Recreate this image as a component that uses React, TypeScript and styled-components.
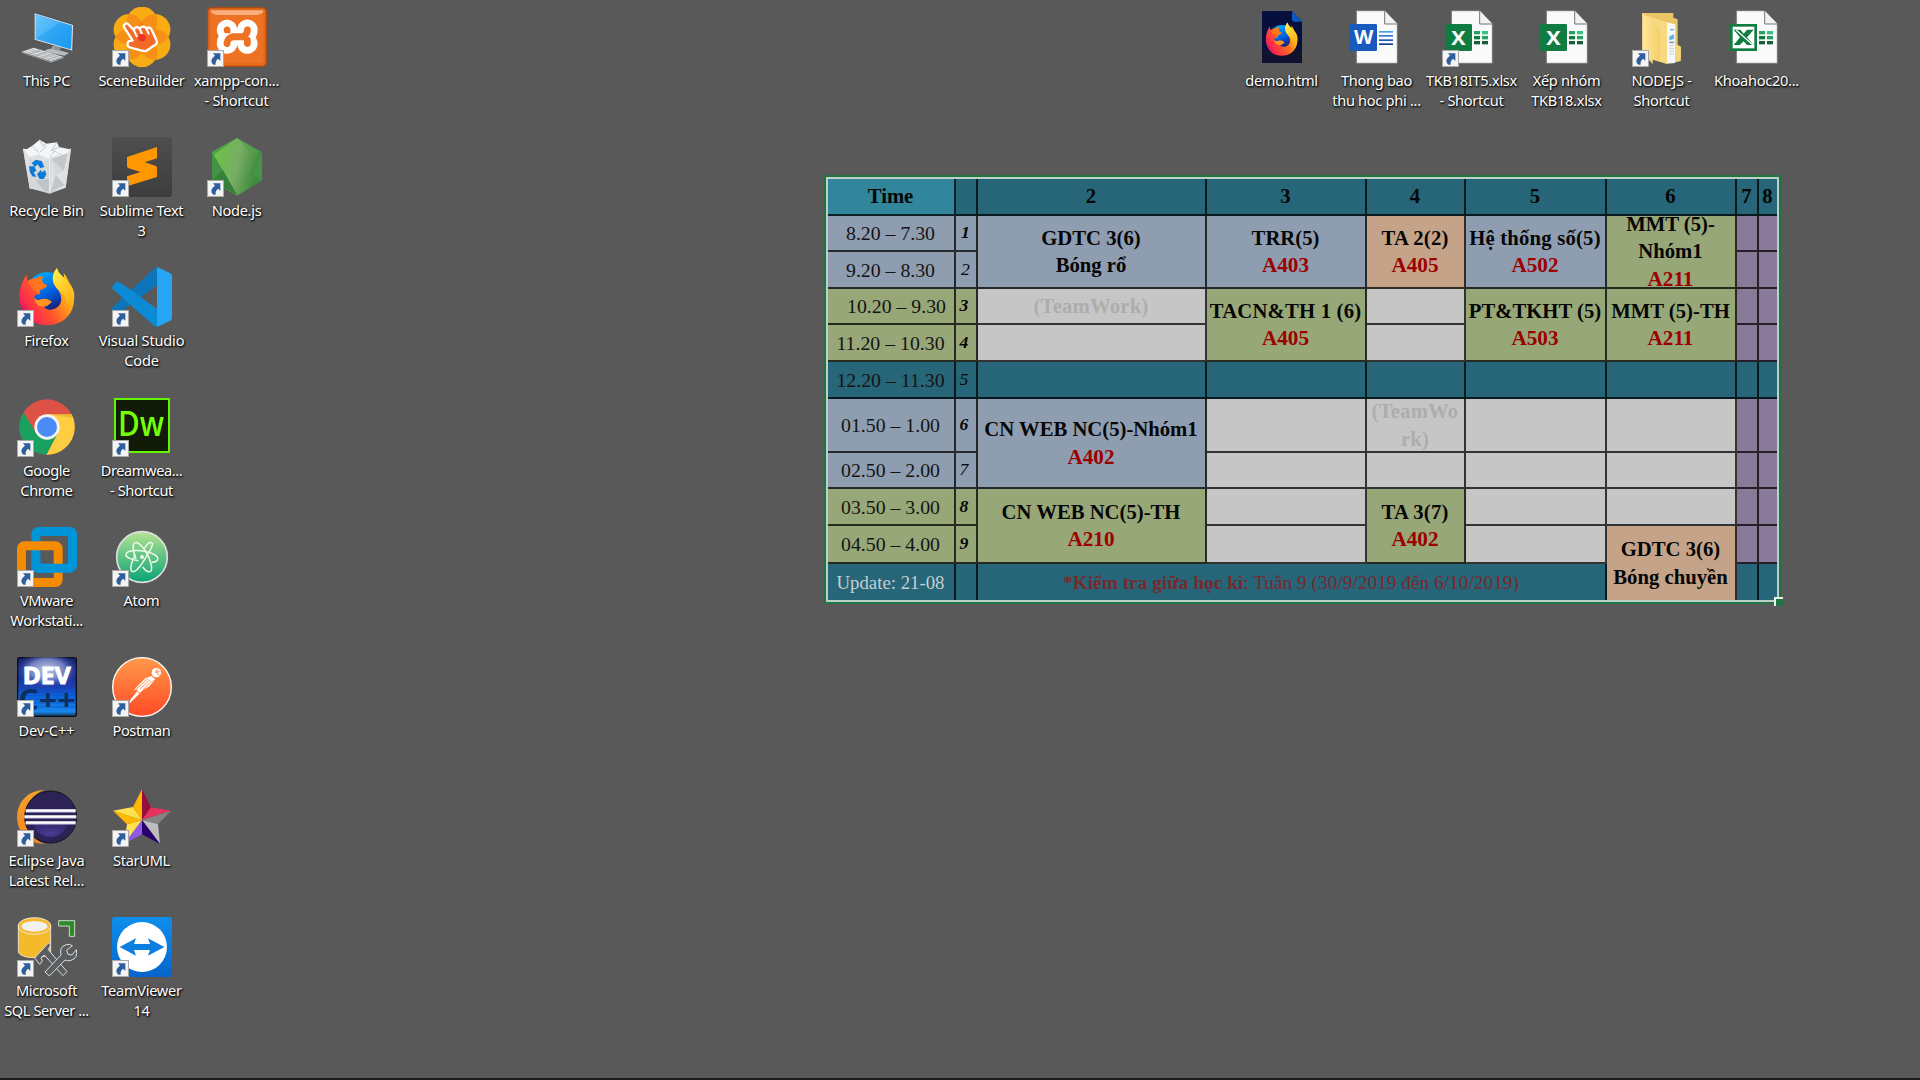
import React from "react";
import styled, { createGlobalStyle, css } from "styled-components";
import { SiXampp } from "react-icons/si";

const GlobalStyle = createGlobalStyle`
  html, body { margin: 0; padding: 0; background: #595959; overflow: hidden; }
  * { box-sizing: border-box; }
`;

const Desktop = styled.main`
  display: flex;
  width: 1920px;
  height: 1080px;
  background: #595959;
  border-bottom: 2px solid #1c1c1c;
  overflow: hidden;
`;

const ShortcutColumns = styled.section`
  display: grid;
  flex: none;
  grid-template-columns: repeat(3, 95px);
  grid-auto-rows: 130px;
  grid-auto-flow: row;
  align-content: start;
`;

const Workspace = styled.section`
  display: flex;
  flex-direction: column;
  flex: 1;
`;

const FileRow = styled.div`
  display: flex;
  height: 175px;
  padding-left: 950px;
`;

const Item = styled.figure<{ $col?: number; $row?: number }>`
  display: flex;
  flex-direction: column;
  align-items: center;
  width: 95px;
  height: 130px;
  margin: 0;
  padding-top: 7px;
  ${(p) => p.$col && css`grid-column: ${p.$col};`}
  ${(p) => p.$row && css`grid-row: ${p.$row};`}
`;

const IconBox = styled.div`
  position: relative;
  width: 60px;
  height: 60px;
  margin-right: 1px;
`;

const Art = styled.svg`
  display: block;
  width: 60px;
  height: 60px;
`;

const Overlay = styled.svg`
  position: absolute;
  left: 0;
  bottom: 0;
  width: 17px;
  height: 17px;
`;

const Label = styled.figcaption`
  display: flex;
  flex-direction: column;
  align-items: center;
  margin-top: 3px;
  margin-right: 2px;
  color: #fff;
  font: 400 14.6px/20px "Noto Sans", "Open Sans", sans-serif;
  white-space: nowrap;
  text-shadow: 1px 1px 2px #000, 0 1px 2px rgba(0, 0, 0, 0.8);
`;

const Line = styled.span<{ $ls: number }>`
  letter-spacing: ${(p) => p.$ls}px;
`;

const Frame = styled.div`
  position: relative;
  width: 957px;
  height: 429px;
  margin-left: 539px;
  border: 2px solid #217346;
`;

const Timetable = styled.div`
  display: grid;
  width: 953px;
  height: 425px;
  border: 2px solid #bcd0c5;
  grid-template-columns: 128px 22px 229px 160px 99px 141px 130px 22px 18px;
  grid-template-rows: 37px 36px 37px 36px 37px 37px 54px 36px 37px 38px 36px;
  font-family: "Liberation Serif", "Times New Roman", serif;
  color: #060606;
`;

const Handle = styled.span`
  position: absolute;
  right: -4px;
  bottom: -4px;
  width: 9px;
  height: 9px;
  border: solid #e8f0ec;
  border-width: 2px 0 0 2px;
  background: #217346;
`;

const tones = {
  teal: "#266678",
  cyan: "#31869b",
  blue: "#8f9db1",
  green: "#97a778",
  peach: "#c4a389",
  grey: "#c6c6c6",
  purple: "#8a7a9a",
};
type Tone = keyof typeof tones;

const Cell = styled.div<{ $tone: Tone; $c: number; $r: number; $cs: number; $rs: number }>`
  display: flex;
  flex-direction: column;
  align-items: center;
  justify-content: center;
  overflow: hidden;
  min-width: 0;
  min-height: 0;
  padding-top: 1px;
  padding-right: 1px;
  grid-column: ${(p) => p.$c} / span ${(p) => p.$cs};
  grid-row: ${(p) => p.$r} / span ${(p) => p.$rs};
  background: ${(p) => tones[p.$tone]};
  border: 0 solid rgba(0, 0, 0, 0.74);
  border-right-width: ${(p) => (p.$c + p.$cs > 9 ? 0 : 2)}px;
  border-bottom-width: ${(p) => (p.$r + p.$rs > 11 ? 0 : 2)}px;
`;

const Subject = styled.span<{ $faint?: boolean; $wide?: boolean }>`
  flex: none;
  font-size: 20.7px;
  line-height: 27.3px;
  font-weight: 700;
  white-space: nowrap;
  letter-spacing: ${(p) => (p.$wide ? 0.2 : 0)}px;
  color: ${(p) => (p.$faint ? "#adadad" : "inherit")};
`;

const Room = styled(Subject)`
  font-size: 21.2px;
  color: #9c0000;
`;

const Hours = styled.span<{ $indent?: boolean; $light?: boolean }>`
  font-size: ${(p) => (p.$light ? 18.8 : 19.8)}px;
  white-space: nowrap;
  padding-left: ${(p) => (p.$indent ? 12 : 0)}px;
  color: ${(p) => (p.$light ? "#c4cfd2" : "#141414")};
`;

const Period = styled.span<{ $bold: boolean; $end?: boolean }>`
  font-size: 17.6px;
  line-height: 20px;
  font-style: italic;
  font-weight: ${(p) => (p.$bold ? 700 : 400)};
  padding-bottom: 3px;
  padding-right: ${(p) => (p.$end ? 0 : 3)}px;
`;

const Note = styled.span`
  font-size: 19.35px;
  white-space: nowrap;
  color: #79282c;
`;

/* ---------- icons, drawn on a 180-unit board ---------- */

const ShortcutArrow = () => (
  <Overlay viewBox="0 0 51 51">
    <rect x="1.5" y="1.5" width="48" height="48" fill="#f4f4f4" stroke="#a9a9a9" strokeWidth="3" />
    <path d="M18 10H40V32L33 26C27 31 25 36 26 44H20C11 38 10 27 24 17Z" fill="#2d5f9e" />
  </Overlay>
);

const ThisPC = () => (
  <Art viewBox="0 0 180 180">
    <defs>
      <linearGradient id="pc" x1="0" y1="0" x2="1" y2="1">
        <stop offset="0" stopColor="#6cc5fb" />
        <stop offset="1" stopColor="#1a9df5" />
      </linearGradient>
    </defs>
    <path d="M108 116l18 6v8l30 8-14 8q-12-2-22-4-22-4-38-10 4-6 22-7z" fill="#b7bcc0" />
    <path d="M112 113l20 8-4 10-20-4z" fill="#8b9196" />
    <path d="M53 17L170 53 167 131 53 98Z" fill="#d9dde0" />
    <path d="M56 21L165 56 162 127 56 96Z" fill="url(#pc)" />
    <path d="M56 96L130 45 165 56 162 127Z" fill="#0d8fee" opacity=".35" />
    <path d="M53 17L170 53 167 131" fill="none" stroke="#303438" strokeWidth="2" />
    <path d="M14 134L50 122 140 150 103 163Z" fill="#dfe1e3" />
    <path d="M14 134v4l88 29 38-13v-4l-37 13z" fill="#8f9499" />
    <path d="M26 134l90 26M36 130l90 26M44 127l88 25M36 141l38-13M54 147l38-13M74 153l38-13M92 158l36-13" stroke="#9aa0a5" strokeWidth="2" fill="none" />
  </Art>
);

const SceneBuilder = () => {
  const petals = [0, 60, 120, 180, 240, 300].map((a) => {
    const t = (a * Math.PI) / 180;
    return [90 + 45 * Math.sin(t), 90 - 45 * Math.cos(t)];
  });
  return (
    <Art viewBox="0 0 180 180">
      {petals.map(([x, y], i) => <circle key={i} cx={x} cy={y} r="46" fill="#fdd00f" />)}
      {petals.map(([x, y], i) => <circle key={i} cx={x} cy={y} r="46" fill="#f0431f" opacity=".26" />)}
      <path d="M37 62C32 52 43 45 51 54L66 70C66 60 77 58 83 65C88 57 98 57 103 64C112 58 118 64 121 73L134 101C137 108 133 111 129 114L103 131C98 134 93 131 86 130L53 121C46 119 44 108 50 103L62 100Z" fill="#f26a25" stroke="#fff" strokeWidth="7" strokeLinejoin="round" />
      <path d="M66 70l8 18M83 66l8 17M103 65l7 15" stroke="#fff" strokeWidth="6" strokeLinecap="round" />
      <circle cx="90" cy="92" r="11" fill="#ee3124" />
    </Art>
  );
};

const Xampp = () => (
  <Art viewBox="0 0 180 180">
    <defs>
      <linearGradient id="xa" x1="0" y1="0" x2="0" y2="1">
        <stop offset="0" stopColor="#f79a58" />
        <stop offset=".16" stopColor="#ea6a1e" />
        <stop offset="1" stopColor="#f07422" />
      </linearGradient>
    </defs>
    <rect x="18" y="18" width="144" height="144" fill="#fff" />
    <SiXampp x="6" y="6" width="168" height="168" size={168} color="#ed7224" />
    <rect x="6" y="6" width="168" height="168" rx="10" fill="none" stroke="#e56a1c" strokeWidth="10" />
    <rect x="2" y="2" width="176" height="176" rx="12" fill="none" stroke="#a9480f" strokeWidth="4" />
    <path d="M12 10H168Q172 20 150 24H30Q8 20 12 10Z" fill="#fbc39b" opacity=".75" />
  </Art>
);

const RecycleBin = () => (
  <Art viewBox="0 0 180 180">
    <path d="M18 36L162 36 146 152 98 170 38 154Z" fill="#c9cdd0" />
    <path d="M18 36L162 36 146 152 98 166 38 154Z" fill="#e3e5e7" opacity=".8" />
    <path d="M24 40L46 26 68 8 88 20 120 16 126 30 154 36 148 62 120 54 96 66 66 52 36 60Z" fill="#f4f5f6" />
    <path d="M68 8l10 20 10-8M46 26l20 22 22-20M120 16l-18 26 24-12M96 66l16-24 36 20" stroke="#c1c5c8" strokeWidth="3" fill="none" />
    <path d="M104 66l48-18-12 54zM100 166l16-52 26 30z" fill="#c3c7ca" />
    <path d="M104 66l12 48 24-12zM36 60l18 20 50-14-6 100-60-12z" fill="#d5d8db" />
    <path d="M56 130l24 30 18 6 2-40z" fill="#bfc4c8" />
    <path d="M18 36L98 54 162 36M98 54V168" stroke="#f3f4f5" strokeWidth="2.5" fill="none" />
    <g fill="#0c7bd8">
      <path d="M44 78l12-10 18 4 8 18-12 4-8-12-8 8z" />
      <path d="M36 88l16 0 6 14-8 4 8 14-12-2-8-14z" />
      <path d="M60 112l12-14 2 8 10-6 4 12-8 14-12 0z" />
    </g>
  </Art>
);

const Sublime = () => (
  <Art viewBox="0 0 180 180">
    <defs>
      <linearGradient id="su" x1="0" y1="0" x2="0" y2="1">
        <stop offset="0" stopColor="#4e4e4e" />
        <stop offset="1" stopColor="#3d3d3d" />
      </linearGradient>
    </defs>
    <rect width="180" height="180" rx="10" fill="url(#su)" />
    <path d="M45 118L135 89V120L45 148Z" fill="#ff9800" />
    <path d="M76 101L128 91 135 97V120Z" fill="#e27f00" />
    <path d="M45 60L135 30V64L98 76 132 87Q136 90 135 120L50 94Q45 92 45 86Z" fill="#ff9800" />
  </Art>
);

const NodeJs = () => (
  <Art viewBox="0 0 180 180">
    <defs>
      <linearGradient id="nj" x1="0" y1="0.3" x2="1" y2="0.6">
        <stop offset=".1" stopColor="#6cc04a" />
        <stop offset=".5" stopColor="#78ad64" />
        <stop offset=".9" stopColor="#3f8b3d" />
      </linearGradient>
    </defs>
    <path d="M90 3L165 46V131L90 176 15 131V46Z" fill="url(#nj)" />
    <path d="M15 46L92 176 90 176 15 131Z" fill="#429345" />
    <path d="M15 131L47 98 90 174Z" fill="#37803a" />
    <path d="M165 46L92 176 130 112 165 131Z" fill="#3c8a3e" opacity=".8" />
    <path d="M90 3L165 46 134 52Z" fill="#519c48" opacity=".7" />
    <path d="M165 46L132 112 165 131Z" fill="#46934a" />
    <path d="M90 3L15 46 20 54Z" fill="#4f9f45" />
  </Art>
);

const FirefoxShape = ({ id }: { id: string }) => (
  <>
    <defs>
      <linearGradient id={id + "g"} x1=".2" y1="0" x2=".7" y2="1">
        <stop offset="0" stopColor="#00b4ff" />
        <stop offset=".55" stopColor="#0060df" />
        <stop offset="1" stopColor="#1d1166" />
      </linearGradient>
      <linearGradient id={id + "b"} x1="1" y1=".1" x2="0" y2=".75">
        <stop offset="0" stopColor="#ffe226" />
        <stop offset=".3" stopColor="#ffab15" />
        <stop offset=".6" stopColor="#ff5a2a" />
        <stop offset=".85" stopColor="#ff2c4a" />
        <stop offset="1" stopColor="#c8107d" />
      </linearGradient>
      <linearGradient id={id + "y"} x1="0" y1="0" x2=".4" y2="1">
        <stop offset="0" stopColor="#fff44f" />
        <stop offset="1" stopColor="#ffb81c" />
      </linearGradient>
    </defs>
    <circle cx="90" cy="76" r="61" fill={"url(#" + id + "g)"} />
    <path d="M30 22C28 32 31 38 33 42C42 36 52 33 61 33C66 28 72 28 78 30C74 36 74 40 77 46C80 53 90 51 89 58C85 64 76 66 69 70C70 76 69 80 65 83C57 80 52 84 52 92C57 101 65 100 74 97C84 93 98 97 104 106C96 110 94 118 80 119C92 134 118 130 129 112C137 96 132 76 118 62C102 44 104 22 120 3C124 22 136 24 142 34C141 29 140 22 140 18C152 32 152 42 163 56C171 70 174 85 171 100C170 124 160 143 144 156C122 174 88 180 58 169C29 158 10 131 8 101C5 72 14 42 30 22Z" fill={"url(#" + id + "b)"} />
    <path d="M120 3C124 22 138 26 148 42C163 64 164 92 152 112C150 88 132 80 118 62C104 44 104 20 120 3Z" fill={"url(#" + id + "y)"} />
    <path d="M33 42C42 36 52 33 61 33C66 28 72 28 78 30C74 36 74 40 77 46C80 53 90 51 89 58C85 64 76 66 69 70C70 76 69 80 65 83C50 68 40 60 33 42Z" fill="#ff7a1a" opacity=".8" />
    <path d="M52 92C57 101 65 100 74 97C84 93 98 97 104 106C96 110 94 118 80 119C65 120 52 108 52 92Z" fill="#ff9520" />
  </>
);

const Firefox = () => (
  <Art viewBox="0 0 180 180"><FirefoxShape id="ff" /></Art>
);

const VsCode = () => (
  <Art viewBox="0 0 180 180">
    <path d="M128 3L135 0V55L18 140Q13 141 10 139L1 130Q-2 125 3 119Z" fill="#0e75b8" />
    <path d="M3 67Q-2 61 2 57L12 46Q17 42 22 45L135 125V180L126 176Z" fill="#0b8ad6" />
    <path d="M135 0L175 19Q180 22 180 28V152Q180 158 175 161L135 180Z" fill="#27a7f3" />
  </Art>
);

const Chrome = () => (
  <Art viewBox="0 0 180 180">
    <circle cx="90" cy="90" r="83" fill="#de5246" />
    <path d="M90 52H164A83 83 0 0 1 88 173L122 109Z" fill="#ffcd41" />
    <path d="M20 46A83 83 0 0 0 88 173L122 109 90 126 57 109Z" fill="#18a15f" />
    <path d="M90 52H164L168 63Z" fill="#d9a52e" opacity=".5" />
    <circle cx="90" cy="90" r="38" fill="#f3f3f3" />
    <circle cx="90" cy="90" r="30" fill="#4a8bf5" />
  </Art>
);

const IconText = styled.text`
  font-family: "Open Sans", "Noto Sans", sans-serif;
  font-weight: 700;
`;

const ThinIconText = styled(IconText)`
  font-weight: 600;
`;

const Dreamweaver = () => (
  <Art viewBox="0 0 180 180">
    <rect x="9" y="6" width="162" height="159" fill="#111b08" stroke="#63f500" strokeWidth="6" />
    <ThinIconText x="18" y="117" fontSize="104" fill="#75ff0a" textLength="138" lengthAdjust="spacingAndGlyphs">Dw</ThinIconText>
  </Art>
);

const VMware = () => (
  <Art viewBox="0 0 180 180" fill="none" strokeWidth="27">
    <rect x="56.500" y="13.500" width="110" height="110" rx="8" stroke="#0095d9" />
    <rect x="13.500" y="56.500" width="110" height="110" rx="8" stroke="#f58b00" />
    <path d="M56.500 84V116Q56.500 123.500 64 123.500H150" stroke="#0095d9" />
  </Art>
);

const Atom = () => (
  <Art viewBox="0 0 180 180">
    <defs>
      <linearGradient id="at" x1="0" y1="0" x2="0" y2="1">
        <stop offset="0" stopColor="#b6e392" />
        <stop offset="1" stopColor="#07a377" />
      </linearGradient>
    </defs>
    <circle cx="90" cy="90" r="76" fill="url(#at)" stroke="#dedede" strokeWidth="5" />
    <g fill="none" stroke="#eefbe9" strokeWidth="4.500">
      <path d="M79 101C56 98 40 90 42 82C44 71 72 68 98 73C122 77 139 88 137 97C136 103 129 105 120 106" />
      <path d="M72 96C62 73 60 52 69 47C78 42 96 62 108 86C119 109 123 130 114 134C108 137 100 130 92 120" />
      <path d="M97 64C106 48 117 42 121 49C125 58 110 76 96 100C82 124 67 138 60 133C53 127 58 105 70 82" />
    </g>
    <circle cx="90" cy="90" r="6" fill="#f4fff0" />
  </Art>
);

const DevCpp = () => (
  <Art viewBox="0 0 180 180">
    <defs>
      <linearGradient id="dv" x1="0" y1="0" x2="0" y2="1">
        <stop offset="0" stopColor="#17206a" />
        <stop offset=".5" stopColor="#1d3fb0" />
        <stop offset=".65" stopColor="#0c63dc" />
        <stop offset=".92" stopColor="#1787ea" />
        <stop offset="1" stopColor="#16344f" />
      </linearGradient>
      <radialGradient id="dw">
        <stop offset="0" stopColor="#c5cbea" />
        <stop offset=".55" stopColor="#8490cb" stopOpacity=".85" />
        <stop offset="1" stopColor="#2338a0" stopOpacity="0" />
      </radialGradient>
    </defs>
    <rect x="2" y="2" width="176" height="176" rx="6" fill="url(#dv)" stroke="#0c0d18" strokeWidth="4" />
    <ellipse cx="90" cy="38" rx="96" ry="56" fill="url(#dw)" />
    <path d="M4 96H176M4 106H176M4 116H176M4 126H176M4 138H176M4 150H176" stroke="#0b4fc0" strokeWidth="3" opacity=".6" />
    <IconText x="4" y="159" fontSize="86" fill="#0c2f5f" textLength="172" lengthAdjust="spacingAndGlyphs">C++</IconText>
    <IconText x="17" y="81" fontSize="70" fill="#fff" stroke="#fff" strokeWidth="3" textLength="144" lengthAdjust="spacingAndGlyphs">DEV</IconText>
  </Art>
);

const Postman = () => (
  <Art viewBox="0 0 180 180">
    <defs>
      <linearGradient id="po" x1="0" y1="0" x2="0" y2="1">
        <stop offset="0" stopColor="#ff9a4a" />
        <stop offset="1" stopColor="#ff4a26" />
      </linearGradient>
    </defs>
    <circle cx="90" cy="90" r="88" fill="url(#po)" stroke="#fff" strokeWidth="4" />
    <circle cx="133" cy="47" r="14" fill="#fff" />
    <path d="M136 36L131 46 142 44M134 49l8 6" stroke="#ff7a3c" strokeWidth="3" fill="none" />
    <path d="M119 57L129 67 112 88 92 100 76 116 60 132 52 140 55 128 70 110 78 98 66 98 82 82 100 64Z" fill="#fff" />
    <path d="M72 97L108 64M84 96L114 68M93 98L121 70M76 104l12 6" stroke="#ff7a3c" strokeWidth="2.500" />
  </Art>
);

const Eclipse = () => (
  <Art viewBox="0 0 180 180">
    <defs>
      <radialGradient id="ec" cx=".5" cy=".7" r=".5">
        <stop offset="0" stopColor="#4b3b93" />
        <stop offset="1" stopColor="#3a2d78" />
      </radialGradient>
      <linearGradient id="eo" x1="0" y1="0" x2="0" y2="1">
        <stop offset="0" stopColor="#f7a22b" />
        <stop offset="1" stopColor="#f58220" />
      </linearGradient>
    </defs>
    <path d="M82 9C-26 12 -28 168 82 171C8 146 8 32 82 9Z" fill="url(#eo)" />
    <circle cx="101" cy="90" r="78" fill="#2c2255" stroke="#15121c" strokeWidth="3" />
    <path d="M49 112H151A53 53 0 0 1 49 112Z" fill="url(#ec)" />
    <path d="M26 71H176M22 89H178M26 107H176" stroke="#fff" strokeWidth="9" />
    <path d="M26 75H176M22 93H178M26 111H176" stroke="#b9b4d8" strokeWidth="2" />
  </Art>
);

const StarUml = () => {
  const facets: [string, string][] = [
    ["90,7 117,61", "#970f3c"],
    ["117,61 177,71", "#e8315c"],
    ["177,71 138,112", "#838383"],
    ["138,112 144,171", "#bdbdbd"],
    ["144,171 90,142", "#29006b"],
    ["90,142 36,171", "#8f5ae6"],
    ["36,171 45,112", "#ffe04e"],
    ["45,112 3,71", "#ffb800"],
    ["3,71 63,60", "#ffe04e"],
    ["63,60 90,7", "#ffb800"],
  ];
  return (
    <Art viewBox="0 0 180 180">
      {facets.map(([p, c]) => <polygon key={p} points={"90,99 " + p} fill={c} />)}
    </Art>
  );
};

const SqlServer = () => (
  <Art viewBox="0 0 180 180">
    <path d="M4 27V104C8 128 94 128 101 104V27Z" fill="#f5b92c" stroke="#e9dfc6" strokeWidth="3" />
    <ellipse cx="52.500" cy="27" rx="49" ry="25" fill="#f5b92c" stroke="#efe6d0" strokeWidth="3" />
    <ellipse cx="52.500" cy="28" rx="39" ry="16" fill="#f1f1f1" />
    <path d="M125 11H173V58H157V27H125Z" fill="#2f8a2c" stroke="#c9dcc5" strokeWidth="3" />
    <g fill="#5b5e60" stroke="#dcdcdc" strokeWidth="3" strokeLinejoin="round">
      <path d="M53 123L94 78 101 84 94 98 150 164 138 176 82 114 72 122 76 132 68 142Z" />
      <path d="M84 165L132 114Q126 88 148 83Q158 80 166 86L149 100 153 112 165 114 178 98Q184 124 162 130Q152 134 144 129L97 177Z" />
    </g>
  </Art>
);

const TeamViewer = () => (
  <Art viewBox="0 0 180 180">
    <defs>
      <linearGradient id="tv" x1="0" y1="0" x2="0" y2="1">
        <stop offset="0" stopColor="#0f8fec" />
        <stop offset="1" stopColor="#0664cb" />
      </linearGradient>
    </defs>
    <rect width="180" height="180" rx="8" fill="url(#tv)" />
    <circle cx="90" cy="90" r="75" fill="#fff" />
    <path d="M23 90L72 64 66 81H114L108 64 157 90 108 116 114 99H66L72 116Z" fill="#0d7fe0" />
  </Art>
);

const HtmlFile = () => (
  <Art viewBox="0 0 180 180">
    <path d="M30 12H120L150 44V168H30Z" fill="#070f3c" />
    <path d="M30 130H150V168H30Z" fill="#101230" />
    <path d="M120 12L150 44H128Q120 44 120 36Z" fill="#0a59c2" />
    <path d="M121 9H153V43Z" fill="#595959" />
    <g transform="translate(37 45) scale(.58)"><FirefoxShape id="fh" /></g>
  </Art>
);

const Sheet = ({ children }: { children: React.ReactNode }) => (
  <Art viewBox="0 0 180 180">
    <path d="M28 11H114L151 50V169H28Z" fill="#fafafa" stroke="#757575" strokeWidth="3" />
    <path d="M113 11V51H151" fill="#f2f2f2" stroke="#757575" strokeWidth="3" />
    {children}
  </Art>
);

const WordFile = () => (
  <Sheet>
    <rect x="9" y="51" width="81" height="81" rx="4" fill="#185abd" />
    <IconText x="21" y="112" fontSize="57" fill="#fff" textLength="58" lengthAdjust="spacingAndGlyphs">W</IconText>
    <rect x="96" y="72" width="42" height="5" fill="#41a5ee" />
    <rect x="96" y="84" width="42" height="5" fill="#2b7cd3" />
    <rect x="96" y="97" width="42" height="5" fill="#185abd" />
    <rect x="96" y="109" width="42" height="5" fill="#103f91" />
  </Sheet>
);

const SheetBars = () => (
  <>
    <path d="M96 72h18v10h-18z" fill="#21a366" />
    <path d="M120 72h18v10h-18z" fill="#33c481" />
    <path d="M96 87h18v10h-18z" fill="#107c41" />
    <path d="M120 87h18v10h-18z" fill="#21a366" />
    <path d="M96 102h42v10h-42z" fill="#185c37" />
    <path d="M114 70h6v44h-6z" fill="#fafafa" />
  </>
);

const ExcelFile = () => (
  <Sheet>
    <rect x="9" y="51" width="81" height="81" rx="4" fill="#107c41" />
    <IconText x="28" y="113" fontSize="60" fill="#fff" textLength="43" lengthAdjust="spacingAndGlyphs">X</IconText>
    <SheetBars />
  </Sheet>
);

const ExcelLegacyFile = () => (
  <Sheet>
    <rect x="13" y="55" width="73" height="73" fill="#fff" stroke="#107c41" strokeWidth="8" />
    <path d="M20 68H40L50 80 60 68H80L60 91 80 114H60L50 103 38 114H20L39 91Z" fill="#107c41" />
    <path d="M28 70L78 114" stroke="#fff" strokeWidth="4" />
    <SheetBars />
  </Sheet>
);

const Folder = () => (
  <Art viewBox="0 0 180 180">
    <defs>
      <linearGradient id="fo" x1="0" y1="0" x2="1" y2="0">
        <stop offset="0" stopColor="#ffe79b" />
        <stop offset="1" stopColor="#f3cf69" />
      </linearGradient>
    </defs>
    <path d="M31 18H124V32L137 37V114L147 120 146 162 122 166 31 130Z" fill="#e9c566" />
    <path d="M102 46L130 52V168L102 170Z" fill="#f5f6f7" />
    <path d="M114 66h12v4h-12zM112 88l14-6v14l-14 4z" fill="#5fb3ea" />
    <path d="M112 104h14v4h-14zM112 116h14M112 124h14M112 132h14M112 140h14" stroke="#b8bdc2" strokeWidth="2" fill="#4b90cf" />
    <path d="M46 26L105 46V171L62 158Z" fill="#f7d97f" />
    <path d="M31 18L70 48Q84 60 84 80V160L62 158V172L31 134Z" fill="url(#fo)" />
    <path d="M129 110L137 114 147 120 146 162 129 166Z" fill="#f5d57a" />
  </Art>
);

/* ---------- desktop items ---------- */

type Entry = {
  art: React.FC;
  lines: string[];
  ls?: number;
  link?: boolean;
  col?: number;
  row?: number;
};

const shortcuts: Entry[] = [
  { art: ThisPC, lines: ["This PC"], ls: -0.4, col: 1, row: 1 },
  { art: SceneBuilder, lines: ["SceneBuilder"], link: true, col: 2, row: 1 },
  { art: Xampp, lines: ["xampp-con...", "- Shortcut"], link: true, col: 3, row: 1 },
  { art: RecycleBin, lines: ["Recycle Bin"], ls: -0.2, col: 1, row: 2 },
  { art: Sublime, lines: ["Sublime Text", "3"], link: true, col: 2, row: 2 },
  { art: NodeJs, lines: ["Node.js"], link: true, col: 3, row: 2 },
  { art: Firefox, lines: ["Firefox"], link: true, col: 1, row: 3 },
  { art: VsCode, lines: ["Visual Studio", "Code"], ls: -0.2, link: true, col: 2, row: 3 },
  { art: Chrome, lines: ["Google", "Chrome"], ls: -0.4, link: true, col: 1, row: 4 },
  { art: Dreamweaver, lines: ["Dreamwea...", "- Shortcut"], ls: -0.4, link: true, col: 2, row: 4 },
  { art: VMware, lines: ["VMware", "Workstati..."], ls: -0.4, link: true, col: 1, row: 5 },
  { art: Atom, lines: ["Atom"], link: true, col: 2, row: 5 },
  { art: DevCpp, lines: ["Dev-C++"], ls: -0.1, link: true, col: 1, row: 6 },
  { art: Postman, lines: ["Postman"], ls: -0.4, link: true, col: 2, row: 6 },
  { art: Eclipse, lines: ["Eclipse Java", "Latest Rel..."], ls: -0.2, link: true, col: 1, row: 7 },
  { art: StarUml, lines: ["StarUML"], link: true, col: 2, row: 7 },
  { art: SqlServer, lines: ["Microsoft", "SQL Server ..."], ls: -0.4, link: true, col: 1, row: 8 },
  { art: TeamViewer, lines: ["TeamViewer", "14"], link: true, col: 2, row: 8 },
];

const files: Entry[] = [
  { art: HtmlFile, lines: ["demo.html"] },
  { art: WordFile, lines: ["Thong bao", "thu hoc phi ..."] },
  { art: ExcelFile, lines: ["TKB18IT5.xlsx", "- Shortcut"], link: true },
  { art: ExcelFile, lines: ["Xếp nhóm", "TKB18.xlsx"] },
  { art: Folder, lines: ["NODEJS -", "Shortcut"], link: true },
  { art: ExcelLegacyFile, lines: ["Khoahoc20..."] },
];

const DesktopItem = ({ art: Picture, lines, ls = -0.3, link, col, row }: Entry) => (
  <Item $col={col} $row={row}>
    <IconBox>
      <Picture />
      {link && <ShortcutArrow />}
    </IconBox>
    <Label>
      {lines.map((l) => <Line key={l} $ls={ls}>{l}</Line>)}
    </Label>
  </Item>
);

/* ---------- timetable ---------- */

const Box = ({ t, c, r, cs = 1, rs = 1, children }: {
  t: Tone; c: number; r: number; cs?: number; rs?: number; children?: React.ReactNode;
}) => <Cell $tone={t} $c={c} $r={r} $cs={cs} $rs={rs}>{children}</Cell>;

const slots: { r: number; time: string; n: string; t: Tone; bold: boolean }[] = [
  { r: 2, time: "8.20 – 7.30", n: "1", t: "blue", bold: true },
  { r: 3, time: "9.20 – 8.30", n: "2", t: "blue", bold: false },
  { r: 4, time: "10.20 – 9.30", n: "3", t: "green", bold: true },
  { r: 5, time: "11.20 – 10.30", n: "4", t: "green", bold: true },
  { r: 6, time: "12.20 – 11.30", n: "5", t: "teal", bold: false },
  { r: 7, time: "01.50 – 1.00", n: "6", t: "blue", bold: true },
  { r: 8, time: "02.50 – 2.00", n: "7", t: "blue", bold: false },
  { r: 9, time: "03.50 – 3.00", n: "8", t: "green", bold: true },
  { r: 10, time: "04.50 – 4.00", n: "9", t: "green", bold: true },
];

const lessons: { t: Tone; c: number; r: number; rs: number; names: string[]; room?: string; wide?: boolean }[] = [
  { t: "blue", c: 3, r: 2, rs: 2, names: ["GDTC 3(6)", "Bóng rổ"] },
  { t: "blue", c: 4, r: 2, rs: 2, names: ["TRR(5)"], room: "A403" },
  { t: "peach", c: 5, r: 2, rs: 2, names: ["TA 2(2)"], room: "A405", wide: true },
  { t: "blue", c: 6, r: 2, rs: 2, names: ["Hệ thống số(5)"], room: "A502", wide: true },
  { t: "green", c: 7, r: 2, rs: 2, names: ["MMT (5)-", "Nhóm1"], room: "A211" },
  { t: "green", c: 4, r: 4, rs: 2, names: ["TACN&TH 1 (6)"], room: "A405", wide: true },
  { t: "green", c: 6, r: 4, rs: 2, names: ["PT&TKHT (5)"], room: "A503" },
  { t: "green", c: 7, r: 4, rs: 2, names: ["MMT (5)-TH"], room: "A211" },
  { t: "blue", c: 3, r: 7, rs: 2, names: ["CN WEB NC(5)-Nhóm1"], room: "A402" },
  { t: "green", c: 3, r: 9, rs: 2, names: ["CN WEB NC(5)-TH"], room: "A210" },
  { t: "green", c: 5, r: 9, rs: 2, names: ["TA 3(7)"], room: "A402", wide: true },
  { t: "peach", c: 7, r: 10, rs: 2, names: ["GDTC 3(6)", "Bóng chuyền"] },
];

const vacant: [number, number][] = [
  [3, 5], [5, 4], [5, 5],
  [4, 7], [6, 7], [7, 7],
  [4, 8], [5, 8], [6, 8], [7, 8],
  [4, 9], [6, 9], [7, 9],
  [4, 10], [6, 10],
];

const Schedule = () => (
  <Frame>
    <Timetable>
      <Box t="cyan" c={1} r={1}><Subject>Time</Subject></Box>
      <Box t="teal" c={2} r={1} />
      {["2", "3", "4", "5", "6", "7", "8"].map((d, i) => (
        <Box key={d} t="teal" c={i + 3} r={1}><Subject>{d}</Subject></Box>
      ))}
      {slots.map((s) => (
        <React.Fragment key={s.n}>
          <Box t={s.t} c={1} r={s.r}><Hours $indent={s.n === "3"}>{s.time}</Hours></Box>
          <Box t={s.t} c={2} r={s.r}><Period $bold={s.bold} $end={s.r < 4}>{s.n}</Period></Box>
        </React.Fragment>
      ))}
      {lessons.map((l) => (
        <Box key={l.c + "-" + l.r} t={l.t} c={l.c} r={l.r} rs={l.rs}>
          {l.names.map((n) => <Subject key={n} $wide={l.wide}>{n}</Subject>)}
          {l.room && <Room>{l.room}</Room>}
        </Box>
      ))}
      <Box t="grey" c={3} r={4}><Subject $faint $wide>(TeamWork)</Subject></Box>
      <Box t="grey" c={5} r={7}>
        <Subject $faint $wide>(TeamWo</Subject>
        <Subject $faint $wide>rk)</Subject>
      </Box>
      {vacant.map(([c, r]) => <Box key={c + "v" + r} t="grey" c={c} r={r} />)}
      {[3, 4, 5, 6, 7, 8, 9].map((c) => <Box key={c} t="teal" c={c} r={6} />)}
      {[2, 3, 4, 5, 7, 8, 9, 10].map((r) => (
        <React.Fragment key={r}>
          <Box t="purple" c={8} r={r} />
          <Box t="purple" c={9} r={r} />
        </React.Fragment>
      ))}
      <Box t="teal" c={1} r={11}><Hours $light>Update: 21-08</Hours></Box>
      <Box t="teal" c={2} r={11} />
      <Box t="teal" c={3} r={11} cs={4}>
        <Note><b>*Kiểm tra giữa học kì</b>: Tuần 9 (30/9/2019 đến 6/10/2019)</Note>
      </Box>
      <Box t="teal" c={8} r={11} />
      <Box t="teal" c={9} r={11} />
    </Timetable>
    <Handle />
  </Frame>
);

export default function App() {
  return (
    <Desktop>
      <GlobalStyle />
      <ShortcutColumns>
        {shortcuts.map((s) => <DesktopItem key={s.lines[0]} {...s} />)}
      </ShortcutColumns>
      <Workspace>
        <FileRow>
          {files.map((f) => <DesktopItem key={f.lines[0]} {...f} />)}
        </FileRow>
        <Schedule />
      </Workspace>
    </Desktop>
  );
}
